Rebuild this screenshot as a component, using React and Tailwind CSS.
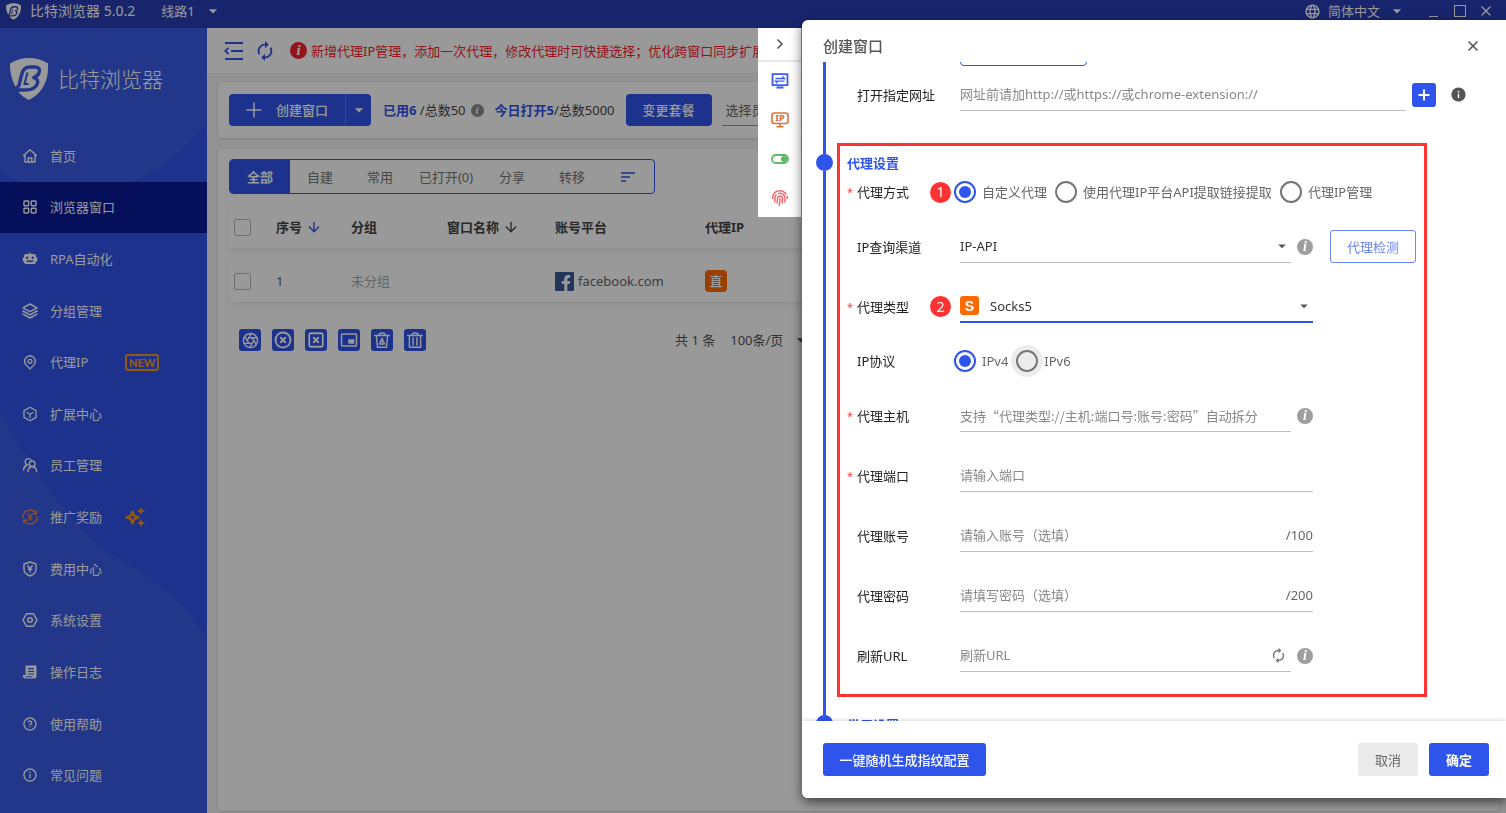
import { useState } from 'react';
import { FaFacebookF, FaFingerprint } from 'react-icons/fa';
import { MdAutorenew, MdInfo, MdLanguage, MdArrowDropDown, MdPictureInPictureAlt } from 'react-icons/md';
import { RiMapPinLine, RiQuestionLine, RiInformationLine } from 'react-icons/ri';
import { Aperture, ArrowDown, ChevronRight, CircleX, LayoutGrid, Plus, SquareX, X } from 'lucide-react';

/* ---------- icons ---------- */

const Line = ({ children, className = 'w-4 h-4', width = 1.5 }) => (
  <svg
    viewBox="0 0 16 16"
    className={className}
    fill="none"
    stroke="currentColor"
    strokeWidth={width}
    strokeLinecap="round"
    strokeLinejoin="round"
    aria-hidden="true"
  >
    {children}
  </svg>
);

const Logo = ({ className }) => (
  <svg viewBox="0 0 38 42" className={className} fill="none" aria-hidden="true">
    <path fill="#fff" d="M0 5.500C6 1.500 13 0 19 0s13 1.500 19 5.500c.8 15.500-4 28.500-19 36.500-4-2-7.500-4.500-10-7.500L5.500 29C1.500 21.500-.3 13 0 5.500Z" />
    {/* slanted mark cut into the shield */}
    <path
      stroke="currentColor"
      strokeWidth="3.400"
      strokeLinejoin="round"
      d="M5.500 30.500 8.800 28 12 15.500C13.200 10.800 15.500 9 20 9h4.500c4.500 0 6 2.600 4.600 5.800-1 2.400-2.800 3.900-5.300 4.800 3.500 1 4.500 3.400 3.500 6.200-1.600 4.400-5.500 6.200-11 6.200H5.500"
    />
    <path stroke="currentColor" strokeWidth="2" d="m17.500 14.500-3 11.500h4" />
  </svg>
);

const HomeIcon = () => (
  <Line width={1.4}>
    <path d="M1.500 7.500 8 1.800l6.500 5.700M3 6.800V14h10V6.800M6.200 14v-4h3.600v4" />
  </Line>
);

const RobotIcon = () => (
  <svg viewBox="0 0 16 16" className="w-4 h-4" fill="currentColor" aria-hidden="true">
    <path
      fillRule="evenodd"
      d="M7.300 1.500h1.400V3H12a2 2 0 0 1 2 2v1.500h1.300v4H14V11a2 2 0 0 1-2 2H4a2 2 0 0 1-2-2v-.5H.7v-4H2V5a2 2 0 0 1 2-2h3.300ZM5.200 5.500a1.200 1.200 0 1 0 0 2.400 1.200 1.200 0 0 0 0-2.400Zm5.600 0a1.200 1.200 0 1 0 0 2.400 1.200 1.200 0 0 0 0-2.400ZM4.500 9.600v1.300h7V9.600Z"
    />
  </svg>
);

const LayersIcon = () => (
  <Line>
    <path d="M8 1 15 4.800 8 8.600 1 4.800ZM1 8l7 3.800L15 8M1 11.200 8 15l7-3.800" />
  </Line>
);

const CubeIcon = () => (
  <Line width={1.3}>
    <path d="M8 1.200 14 4.600v6.800L8 14.800l-6-3.400V4.600ZM8 8.300v3.400M8 8.300 5 6.500M8 8.300l3-1.800" />
  </Line>
);

const StaffIcon = () => (
  <Line width={1.4}>
    <path d="M6 8A3.200 3.200 0 1 1 9 3M1.500 13c.2-2.500 1.500-4.200 3.500-5" />
    <circle cx="10.200" cy="6.800" r="2.800" />
    <path d="M6 14.500c.2-3 2-4.800 4.200-4.800s4.200 1.800 4.400 4.800" />
  </Line>
);

const RewardIcon = () => (
  <Line className="w-4 h-4 text-[#f08040]" width={1.4}>
    <path d="M1 8.500a7 7 0 0 1 13-4M15 7.500a7 7 0 0 1-13 4M14.300 2v2.800h-2.800M1.700 14v-2.800h2.800" />
    <path d="M5.800 4.800 8 7.500l2.200-2.700M8 7.500v4M6.200 8h3.600M6.200 9.800h3.600" strokeWidth="1.200" />
  </Line>
);

const FeeIcon = () => (
  <Line width={1.4}>
    <path d="M8 1 14 3v5.500c0 3-2.500 5-6 6.500-3.500-1.500-6-3.500-6-6.500V3ZM5.700 4.800 8 7.500l2.300-2.700M8 7.500V11M6.300 8.300h3.400" />
  </Line>
);

const NutIcon = () => (
  <Line>
    <path d="M4.500 1.800h7L15 8l-3.500 6.200h-7L1 8Z" />
    <circle cx="8" cy="8" r="2.300" />
  </Line>
);

const LogIcon = () => (
  <svg viewBox="0 0 16 16" className="w-4 h-4" fill="currentColor" aria-hidden="true">
    <path
      fillRule="evenodd"
      d="M3.500 1.500h11v10.800a2.200 2.200 0 0 1-2.200 2.200H3a2 2 0 0 1-2-2V11h2.500ZM6 4v1.300h6V4Zm0 2.700V8h6V6.700Zm0 2.700v1.200h6V9.400ZM3 12.300c0 .5.300.9 1 .9h6.300v-.9Z"
    />
  </svg>
);

const SparkleIcon = () => (
  <svg viewBox="0 0 20 20" className="w-5 h-5 text-[#f7941d]" aria-hidden="true">
    <path d="M7.500 4.500 9.200 8.800 13.500 10.500 9.200 12.200 7.500 16.500 5.800 12.200 1.500 10.500 5.800 8.800Z" fill="none" stroke="currentColor" strokeWidth="2.400" strokeLinejoin="round" />
    <path d="m16 0 1.200 2.800L20 4l-2.800 1.200L16 8l-1.200-2.800L12 4l2.800-1.200Zm0 12 1.200 2.800L20 16l-2.800 1.200L16 20l-1.200-2.800L12 16l2.800-1.200Z" fill="currentColor" />
  </svg>
);

const FoldIcon = () => (
  <svg viewBox="0 0 20 18" className="w-5 h-[18px]" fill="none" stroke="currentColor" strokeWidth="1.800" aria-hidden="true">
    <path d="M1 1h18M7 9h12M1 17h18M4.500 5.800 1.300 9l3.200 3.200" />
  </svg>
);

const FilterIcon = () => (
  <svg viewBox="0 0 14 10" className="w-3.5 h-2.5" fill="none" stroke="currentColor" strokeWidth="1.600" aria-hidden="true">
    <path d="M0 1h14M0 5h9M0 9h5" />
  </svg>
);

const ScreenIcon = () => (
  <svg viewBox="0 0 18 16" className="w-[18px] h-4" fill="none" stroke="currentColor" strokeWidth="1.800" aria-hidden="true">
    <path d="M1.500 1.200h15v11h-15ZM5.500 14.500h7" />
    <path d="M4.500 5.500h9l-2-2M13.500 8.200h-9l2 2" strokeWidth="1.300" />
  </svg>
);

const IpScreenIcon = () => (
  <svg viewBox="0 0 18 16" className="w-[18px] h-4" fill="none" stroke="currentColor" strokeWidth="1.600" aria-hidden="true">
    <rect x="1" y="1" width="16" height="10.500" rx="2.500" />
    <path d="M9 11.500v3M5.500 14.800h7" />
    <text x="9" y="9.300" textAnchor="middle" fontSize="9" fontWeight="800" fill="currentColor" stroke="none">IP</text>
  </svg>
);

const ToggleIcon = () => (
  <svg viewBox="0 0 18 10" className="w-[18px] h-2.5" aria-hidden="true">
    <rect x="1" y="1" width="16" height="8" rx="4" fill="none" stroke="currentColor" strokeWidth="1.800" />
    <circle cx="13" cy="5" r="3" fill="currentColor" />
  </svg>
);

const RecycleBinIcon = () => (
  <Line className="w-[18px] h-[18px]" width={1.3}>
    <path d="M1.500 4h13M5 4c0-3 6-3 6 0M3 4l1 10.500h8L13 4M8 6.500l-2.300 5h4.600ZM8 9.500v.5" />
  </Line>
);

const TrashIcon = () => (
  <Line className="w-[18px] h-[18px]" width={1.3}>
    <path d="M1.500 4h13M5 4c0-3 6-3 6 0M3 4v10.500h10V4M6.300 6v6.500M9.700 6v6.500" />
  </Line>
);

const ItalicInfo = ({ className }) => (
  <span
    className={`inline-flex shrink-0 items-center justify-center rounded-full font-['Liberation_Serif',serif] font-bold italic text-white ${className}`}
  >
    i
  </span>
);

/* ---------- sidebar ---------- */

const navItems = [
  { label: '首页', icon: <HomeIcon /> },
  { label: '浏览器窗口', icon: <LayoutGrid className="w-4 h-4" strokeWidth={2.2} />, active: true },
  { label: 'RPA自动化', icon: <RobotIcon /> },
  { label: '分组管理', icon: <LayersIcon /> },
  { label: '代理IP', icon: <RiMapPinLine className="w-4 h-4" />, badge: 'new' },
  { label: '扩展中心', icon: <CubeIcon /> },
  { label: '员工管理', icon: <StaffIcon /> },
  { label: '推广奖励', icon: <RewardIcon />, badge: 'sparkle' },
  { label: '费用中心', icon: <FeeIcon /> },
  { label: '系统设置', icon: <NutIcon /> },
  { label: '操作日志', icon: <LogIcon /> },
  { label: '使用帮助', icon: <RiQuestionLine className="w-4 h-4" /> },
  { label: '常见问题', icon: <RiInformationLine className="w-4 h-4" /> },
];

const Sidebar = () => (
  <aside className="relative flex w-[207px] shrink-0 flex-col bg-[#2f54eb] text-white">
    <svg viewBox="0 0 207 785" preserveAspectRatio="none" className="absolute inset-0 h-full w-full" fill="#395ce4" aria-hidden="true">
      <path d="M0 0H207V94C185 125 160 143 133 153C100 166 45 166 0 145Z" />
      <path d="M0 384C16 412 30 436 50 462C62 478 70 488 80 499C95 515 110 526 130 538C165 557 190 580 207 612V785H0Z" />
    </svg>
    <div className="relative flex h-[102px] shrink-0 items-center gap-2.5 pl-2.5">
      <Logo className="h-[42px] w-[38px] text-[#395ce4]" />
      <span className="text-[21px] font-light">比特浏览器</span>
    </div>
    <nav className="relative mb-3 flex flex-1 flex-col">
      {navItems.map((item) => (
        <a
          key={item.label}
          href="#"
          className={`flex flex-1 items-center gap-3 pl-[22px] ${item.active ? 'bg-[#0a1996]' : ''}`}
        >
          {item.icon}
          <span className="w-[63px] whitespace-nowrap">{item.label}</span>
          {item.badge === 'new' && (
            <span className="rounded-[3px] border-2 border-[#f7941d] px-0.5 font-['Lato',sans-serif] text-[11px] font-black leading-[13px] text-[#f7941d]">
              NEW
            </span>
          )}
          {item.badge === 'sparkle' && <SparkleIcon />}
        </a>
      ))}
    </nav>
  </aside>
);

/* ---------- main area ---------- */

const tabs = [
  { label: '自建', width: 'w-[60px]' },
  { label: '常用', width: 'w-[60px]' },
  { label: '已打开(0)', width: 'w-[72px]' },
  { label: '分享', width: 'w-[60px]' },
  { label: '转移', width: 'w-[60px]' },
];

const actions = [
  { name: '打开', icon: <Aperture className="w-[17px] h-[17px]" /> },
  { name: '关闭', icon: <CircleX className="w-[18px] h-[18px]" strokeWidth={2.5} /> },
  { name: '关闭窗口', icon: <SquareX className="w-[18px] h-[18px]" strokeWidth={2.5} /> },
  { name: '排列', icon: <MdPictureInPictureAlt className="w-[18px] h-[18px]" /> },
  { name: '回收站', icon: <RecycleBinIcon /> },
  { name: '删除', icon: <TrashIcon /> },
];

const Checkbox = ({ label }) => (
  <input
    type="checkbox"
    aria-label={label}
    className="block h-[17px] w-[17px] appearance-none rounded-[2px] border border-[#bbb] bg-white checked:bg-[#2f54eb]"
  />
);

const MainArea = () => (
  <main className="flex min-w-0 flex-1 flex-col overflow-hidden bg-[#f4f4f4]">
    <div className="flex h-[45px] shrink-0 items-center bg-white pl-[17px] text-[#2f54eb]">
      <button aria-label="收起菜单"><FoldIcon /></button>
      <button aria-label="刷新" className="ml-2.5"><MdAutorenew className="h-[22px] w-[22px]" /></button>
      <ItalicInfo className="ml-3.5 h-[17px] w-[17px] bg-[#f5222d] text-[15px] leading-none" />
      <p className="ml-1 whitespace-nowrap text-[#f5222d]">
        新增代理IP管理，添加一次代理，修改代理时可快捷选择；优化跨窗口同步扩展
      </p>
    </div>

    <div className="flex flex-1 flex-col gap-[11px] pt-[9px] pr-[7px] pb-0.5 pl-[11px]">
      <section className="flex h-14 items-center whitespace-nowrap rounded bg-white pl-[11px] shadow">
        <button className="flex h-8 w-[116px] items-center gap-2.5 rounded-l bg-[#2f54eb] pl-[13px] font-medium text-white">
          <Plus className="h-6 w-6" strokeWidth={1.5} />
          创建窗口
        </button>
        <button aria-label="更多" className="flex h-8 w-[26px] items-center justify-center rounded-r border-l border-[#5c79ef] bg-[#2f54eb] text-white">
          <MdArrowDropDown className="h-5 w-5" />
        </button>
        <span className="ml-3 text-[#444]">
          <b className="text-[#2f54eb]">已用6</b> /总数50
        </span>
        <ItalicInfo className="ml-[5px] h-[13px] w-[13px] bg-[#8c8c8c] text-[11px] leading-none" />
        <span className="ml-[11px] text-[#444]">
          <b className="text-[#2f54eb]">今日打开5</b>/总数5000
        </span>
        <button className="ml-[11px] h-8 w-[86px] rounded bg-[#2f54eb] font-medium text-white">变更套餐</button>
        <select aria-label="选择员工" className="ml-2.5 h-8 w-[140px] appearance-none border-b border-[#999] pl-1 text-[#666]">
          <option>选择员工</option>
        </select>
      </section>

      <section className="flex-1 rounded bg-white px-[11px] pt-2.5 shadow">
        <div className="flex h-[35px] w-[426px] overflow-hidden rounded border border-[#2f54eb] text-[#777]">
          <button className="w-[60px] bg-[#2f54eb] font-bold text-white">全部</button>
          {tabs.map((tab) => (
            <button key={tab.label} className={tab.width}>{tab.label}</button>
          ))}
          <button aria-label="筛选" className="flex flex-1 items-center justify-center text-[#2f54eb]">
            <FilterIcon />
          </button>
        </div>

        <table className="w-full table-fixed border-separate border-spacing-x-0 border-spacing-y-3 text-left">
          <thead>
            <tr className="h-[42px] rounded text-[#444] shadow-[0_3px_6px_rgba(0,0,0,0.07)]">
              <th className="w-[47px] pl-[5px]"><Checkbox label="全选" /></th>
              <th className="w-[75px]">
                <span className="flex items-center gap-1">序号 <ArrowDown className="h-4 w-4 text-[#2f54eb]" /></span>
              </th>
              <th className="w-24">分组</th>
              <th className="w-[108px]">
                <span className="flex items-center gap-1">窗口名称 <ArrowDown className="h-4 w-4" /></span>
              </th>
              <th className="w-[150px]">账号平台</th>
              <th>代理IP</th>
            </tr>
          </thead>
          <tbody>
            <tr className="h-[42px] rounded text-[#666] shadow-[0_3px_6px_rgba(0,0,0,0.07)]">
              <td className="pl-[5px]"><Checkbox label="选择第1行" /></td>
              <td>1</td>
              <td className="text-[#aaa]">未分组</td>
              <td />
              <td>
                <span className="flex items-center gap-1">
                  <span className="flex h-[19px] w-[19px] items-end justify-end rounded-[1px] bg-[#3b5998] pr-0.5 text-white">
                    <FaFacebookF className="h-4 w-3" />
                  </span>
                  <span>facebook.com</span>
                </span>
              </td>
              <td>
                <span className="flex h-[22px] w-[22px] items-center justify-center rounded bg-[#ff6a00] font-medium text-white">直</span>
              </td>
            </tr>
          </tbody>
        </table>

        <div className="mt-[15px] flex items-center gap-[11px] whitespace-nowrap pl-2.5 text-[#555]">
          {actions.map((action) => (
            <button
              key={action.name}
              aria-label={action.name}
              className="flex h-[22px] w-[22px] items-center justify-center rounded-[3px] bg-[#2f54eb] text-white"
            >
              {action.icon}
            </button>
          ))}
          <span className="ml-[238px]">共 1 条</span>
          <button className="flex items-center gap-2 pl-1">
            100条/页 <MdArrowDropDown className="h-5 w-5" />
          </button>
        </div>
      </section>
    </div>
  </main>
);

/* ---------- create window dialog ---------- */

const Row = ({ label, id, required, step, className = 'mt-[27px] h-[33px]', children }) => (
  <div className={`flex items-center ${className}`}>
    <span className="w-[17px] pr-1 text-right text-[11px] text-[#ff3b3b]">{required ? '*' : ''}</span>
    <label htmlFor={id} className="w-[73px] whitespace-nowrap text-[#222]">{label}</label>
    <span className="w-[30px]">
      {step && (
        <span className="flex h-[21px] w-[21px] items-center justify-center rounded-full bg-[#ff3333] text-sm text-white">
          {step}
        </span>
      )}
    </span>
    {children}
  </div>
);

const Field = ({ id, placeholder, type = 'text', suffix, className = 'w-[353px]' }) => (
  <div className={`flex h-full items-center border-b border-[#bfbfbf] ${className}`}>
    <input id={id} type={type} placeholder={placeholder} className="h-full min-w-0 flex-1 outline-none placeholder:text-[#888]" />
    {suffix}
  </div>
);

const Radio = ({ name, label, checked, onChange, halo }) => (
  <label className="flex items-center gap-1.5 whitespace-nowrap text-[#666]">
    <input
      type="radio"
      name={name}
      checked={checked}
      onChange={onChange}
      className={`h-[22px] w-[22px] appearance-none rounded-full border-2 border-[#757575] bg-clip-content p-[3px] checked:border-[#2f54eb] checked:bg-[#2f54eb] ${
        halo ? 'shadow-[0_0_0_5px_#ececec,inset_0_0_0_11px_#ececec]' : ''
      }`}
    />
    {label}
  </label>
);

const FieldInfo = () => <ItalicInfo className="ml-1.5 h-4 w-4 bg-[#9e9e9e] text-[14px] leading-none" />;

const CreateDialog = () => {
  const [mode, setMode] = useState('custom');
  const [protocol, setProtocol] = useState('ipv4');

  return (
    <div role="dialog" aria-label="创建窗口" className="flex w-[704px] flex-col overflow-hidden rounded-l-md bg-white shadow-[0_4px_12px_rgba(0,0,0,0.6)]">
      <header className="flex h-[42px] shrink-0 items-center justify-between pt-2.5 pr-[25px] pl-[21px]">
        <h2 className="text-[15px] font-medium text-[#555]">创建窗口</h2>
        <button aria-label="关闭" className="text-[#555]"><X className="h-4 w-4" strokeWidth={2.5} /></button>
      </header>

      <div className="min-h-0 flex-1 overflow-hidden">
        {/* basic settings, scrolled past */}
        <div className="flex">
          <div className="ml-3.5 flex w-[17px] flex-col items-center">
            <div className="w-[3px] flex-1 bg-[#2f54eb]" />
          </div>
          <div className="ml-[7px] flex-1 pr-[39px] pb-8">
            <button aria-label="添加" className="-mt-7 ml-[120px] block h-8 w-[127px] rounded border border-[#2f54eb]" />
            <Row label="打开指定网址" id="open-url" className="mt-3 h-[33px]">
              <Field id="open-url" placeholder="网址前请加http://或https://或chrome-extension://" className="flex-1" />
              <button aria-label="添加网址" className="ml-1.5 flex h-6 w-6 items-center justify-center rounded-[3px] bg-[#2f54eb] text-white">
                <Plus className="h-4 w-4" strokeWidth={3} />
              </button>
              <MdInfo className="ml-3.5 h-[17px] w-[17px] text-[#555]" />
            </Row>
          </div>
        </div>

        {/* proxy settings */}
        <div className="flex">
          <div className="ml-3.5 flex w-[17px] flex-col items-center">
            <div className="h-[11px] w-[3px] bg-[#2f54eb]" />
            <div className="h-[17px] w-[17px] rounded-full bg-[#2f54eb]" />
            <div className="w-[3px] flex-1 bg-[#2f54eb]" />
          </div>
          <section className="mr-[79px] mb-[18px] ml-1 flex-1 border-[3px] border-[#ff3333] pt-[7px] pb-[22px]">
            <h3 className="pl-[7px] font-bold leading-5 text-[#2f54eb]">代理设置</h3>
            <Row label="代理方式" required step="1" className="mt-0.5 h-[34px]">
              <div role="radiogroup" aria-label="代理方式" className="-ml-1.5 flex items-center gap-2">
                <Radio name="mode" label="自定义代理" checked={mode === 'custom'} onChange={() => setMode('custom')} />
                <Radio name="mode" label="使用代理IP平台API提取链接提取" checked={mode === 'api'} onChange={() => setMode('api')} />
                <Radio name="mode" label="代理IP管理" checked={mode === 'manage'} onChange={() => setMode('manage')} />
              </div>
            </Row>
            <Row label="IP查询渠道" id="channel" className="mt-[21px] h-[33px]">
              <div className="flex h-full w-[331px] items-center border-b border-[#bfbfbf]">
                <select id="channel" className="h-full flex-1 appearance-none text-[#333] outline-none">
                  <option>IP-API</option>
                </select>
                <MdArrowDropDown className="h-[18px] w-[18px] text-[#555]" />
              </div>
              <FieldInfo />
              <button className="ml-[17px] h-[33px] w-[86px] rounded-[3px] border border-[#6b86f2] text-[#6b86f2]">代理检测</button>
            </Row>
            <Row label="代理类型" id="type" required step="2">
              <div className="flex h-full w-[353px] items-center border-b-2 border-[#2f54eb]">
                <span className="flex h-[19px] w-[19px] items-center justify-center rounded-[3px] bg-[#ff6a00] font-['Liberation_Sans',sans-serif] text-sm font-bold text-white">
                  S
                </span>
                <select id="type" className="ml-[11px] h-full flex-1 appearance-none text-[#333] outline-none">
                  <option>Socks5</option>
                </select>
                <MdArrowDropDown className="h-[18px] w-[18px] text-[#555]" />
              </div>
            </Row>
            <Row label="IP协议" className="mt-[21px] h-[34px]">
              <div role="radiogroup" aria-label="IP协议" className="-ml-1.5 flex items-center gap-2">
                <Radio name="protocol" label="IPv4" checked={protocol === 'ipv4'} onChange={() => setProtocol('ipv4')} />
                <Radio name="protocol" label="IPv6" checked={protocol === 'ipv6'} onChange={() => setProtocol('ipv6')} halo />
              </div>
            </Row>
            <Row label="代理主机" id="host" required className="mt-[21px] h-[33px]">
              {/* CJK font first so that the curly quotes are full width */}
              <Field
                id="host"
                placeholder="支持“代理类型://主机:端口号:账号:密码”自动拆分"
                className="w-[331px] font-['Noto_Sans_CJK_SC',sans-serif]"
              />
              <FieldInfo />
            </Row>
            <Row label="代理端口" id="port" required>
              <Field id="port" placeholder="请输入端口" />
            </Row>
            <Row label="代理账号" id="account">
              <Field id="account" placeholder="请输入账号（选填）" suffix={<span className="text-[#666]">/100</span>} />
            </Row>
            <Row label="代理密码" id="password">
              <Field id="password" type="password" placeholder="请填写密码（选填）" suffix={<span className="text-[#666]">/200</span>} />
            </Row>
            <Row label="刷新URL" id="refresh">
              <Field
                id="refresh"
                placeholder="刷新URL"
                className="w-[331px] pr-1"
                suffix={
                  <button aria-label="刷新" className="text-[#777]"><MdAutorenew className="h-[17px] w-[17px]" /></button>
                }
              />
              <FieldInfo />
            </Row>
          </section>
        </div>

        {/* common settings */}
        <div className="flex">
          <div className="ml-3.5 h-[17px] w-[17px] rounded-full bg-[#2f54eb]" />
          <h3 className="ml-3.5 font-bold leading-5 text-[#2f54eb]">常用设置</h3>
        </div>
      </div>

      <footer className="z-10 flex h-[77px] shrink-0 items-center bg-white pr-[17px] pl-[21px] shadow-[0_-1px_4px_rgba(0,0,0,0.15)]">
        <button className="h-[33px] w-[163px] rounded-[3px] bg-[#2f54eb] font-medium text-white">一键随机生成指纹配置</button>
        <button className="ml-auto h-[33px] w-[60px] rounded-[3px] bg-[#ebebeb] text-[#666]">取消</button>
        <button className="ml-[11px] h-[33px] w-[60px] rounded-[3px] bg-[#2f54eb] font-bold text-white">确定</button>
      </footer>
    </div>
  );
};

const QuickNav = () => (
  <div className="mt-2 mr-px flex h-[189px] w-[43px] flex-col self-start bg-white">
    <button aria-label="展开" className="flex h-[34px] items-center justify-center border-b-2 border-[#e8e8e8] text-[#555]">
      <ChevronRight className="h-4 w-4" strokeWidth={2.5} />
    </button>
    <button aria-label="基础设置" className="flex flex-1 items-center justify-center text-[#3d5afe]"><ScreenIcon /></button>
    <button aria-label="代理设置" className="flex flex-1 items-center justify-center text-[#d9743a]"><IpScreenIcon /></button>
    <button aria-label="常用设置" className="flex flex-1 items-center justify-center text-[#5cb865]"><ToggleIcon /></button>
    <button aria-label="指纹设置" className="flex flex-1 items-center justify-center text-[#f5686f]"><FaFingerprint className="h-4 w-4" /></button>
  </div>
);

export default function App() {
  return (
    <div className="flex min-h-screen flex-col overflow-hidden font-['Noto_Sans','Noto_Sans_CJK_SC',sans-serif] text-[13px] leading-5">
      <header className="flex h-7 shrink-0 items-center bg-[#283eb4] pb-1.5 pl-1.5 text-white">
        <Logo className="h-[17px] w-[15px] text-[#283eb4]" />
        <span className="ml-[9px] text-sm">比特浏览器 5.0.2</span>
        <button className="ml-[26px] flex items-center gap-2">
          线路1 <MdArrowDropDown className="h-5 w-5" />
        </button>
        <button className="ml-auto flex items-center gap-[7px]">
          <MdLanguage className="h-[17px] w-[17px]" />
          <span>简体中文</span>
          <MdArrowDropDown className="h-5 w-5" />
        </button>
        <button aria-label="最小化" className="ml-[22px] h-3 w-[9px] border-b" />
        <button aria-label="最大化" className="ml-4 h-3 w-3 border" />
        <button aria-label="退出" className="mr-3 ml-3"><X className="h-4 w-4" strokeWidth={2} /></button>
      </header>

      <div className="flex flex-1">
        <Sidebar />
        <MainArea />
      </div>

      <div className="fixed inset-0 z-20 flex justify-end bg-black/40 pt-5 pb-[15px]">
        <QuickNav />
        <CreateDialog />
      </div>
    </div>
  );
}
